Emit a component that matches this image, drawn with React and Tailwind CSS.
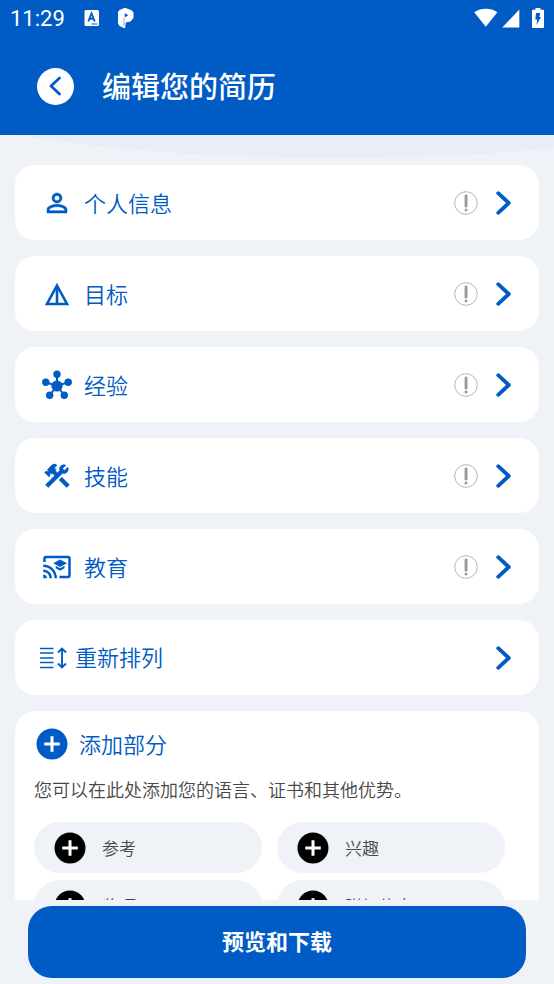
import React from "react";
import { MdPersonOutline, MdConstruction, MdCastForEducation } from "react-icons/md";

const TriangleIcon = () => (
    <svg width="26" height="24" viewBox="0 0 26 24" fill="none" stroke="currentColor" aria-hidden="true">
        <path d="M13 3.5 L23 22 H3 Z" strokeWidth="2.6" />
        <path d="M13 4 V22" strokeWidth="2.6" />
    </svg>
);

const HubIcon = () => (
    <svg width="30" height="30" viewBox="0 0 30 30" fill="currentColor" stroke="currentColor" aria-hidden="true">
        <path d="M15 16 V4 M15 16 L4 12.3 M15 16 L26 12.3 M15 16 L7.8 25 M15 16 L22.2 25" strokeWidth="2" />
        <g stroke="none">
            <circle cx="15" cy="16" r="5.6" />
            <circle cx="15" cy="4.3" r="3.7" />
            <circle cx="3.8" cy="12.2" r="3.7" />
            <circle cx="26.2" cy="12.2" r="3.7" />
            <circle cx="7.7" cy="25.2" r="3.7" />
            <circle cx="22.3" cy="25.2" r="3.7" />
        </g>
    </svg>
);

const ReorderIcon = () => (
    <svg width="30" height="24" viewBox="0 0 30 24" fill="none" stroke="currentColor" aria-hidden="true">
        <path d="M2 2.5 H15.5 M2 7 H15.5 M2 12 H15.5 M2 16.5 H15.5 M2 21.5 H15.5" strokeWidth="1.5" />
        <path d="M24 3 V21 M20 6.5 L24 2.5 L28 6.5 M20 17.5 L24 21.5 L28 17.5" strokeWidth="1.9" />
    </svg>
);

const AlertIcon = () => (
    <svg width="24" height="24" viewBox="0 0 24 24" role="img" aria-label="未完成">
        <circle cx="12" cy="12" r="11.3" fill="none" stroke="#a3a3a3" strokeWidth="0.8" />
        <rect x="10.6" y="3.6" width="2.9" height="13" rx="1.4" fill="#999" />
        <circle cx="12" cy="19" r="1.5" fill="#999" />
    </svg>
);

const ChevronIcon = () => (
    <svg width="18" height="26" viewBox="0 0 18 26" fill="none" stroke="currentColor" strokeWidth="3.8" strokeLinecap="round" strokeLinejoin="round" aria-hidden="true">
        <path d="M3.2 3.2 L13.8 13 L3.2 22.8" />
    </svg>
);

const PlusIcon = ({ className }) => (
    <svg className={className} width="32" height="32" viewBox="0 0 32 32" aria-hidden="true">
        <circle cx="16" cy="16" r="15.5" fill="currentColor" />
        <path d="M16 8.2 V23.8 M8.2 16 H23.8" stroke="#fff" strokeWidth="3" />
    </svg>
);

const sections = [
    { label: "个人信息", icon: <MdPersonOutline size={30} strokeWidth={0.4} className="[&>path[fill=none]]:stroke-none" /> },
    { label: "目标", icon: <TriangleIcon /> },
    { label: "经验", icon: <HubIcon /> },
    { label: "技能", icon: <MdConstruction size={30} strokeWidth={0.5} className="[&>path[fill=none]]:stroke-none" /> },
    { label: "教育", icon: <MdCastForEducation size={30} /> },
];

const extras = ["参考", "兴趣", "奖项", "附加信息"];

function StatusBar() {
    return (
        <div className="flex h-9 items-center justify-between pl-2.5 pr-2.5">
            <div className="flex items-center">
                <span className="w-[74px] pt-0.5 font-['Roboto',sans-serif] text-[22px] leading-9">11:29</span>
                <svg width="16" height="18" viewBox="0 0 16 18" aria-hidden="true">
                    <rect x="0.5" y="1" width="14.5" height="16" rx="1.5" fill="#fff" />
                    <path d="M4.3 12.5 L7.5 4.5 L10.8 12.5 M5.4 9.8 H9.6" fill="none" stroke="#005bc5" strokeWidth="1.9" />
                    <path d="M7.5 15 H13.5" stroke="#005bc5" strokeWidth="1" />
                </svg>
                <svg className="ml-4" width="20" height="22" viewBox="0 0 20 22" aria-hidden="true">
                    <path d="M2 5 L3.5 3 L9 0.8 L15.5 3.2 L17.5 5.5 V11 L14.5 14.5 L9.8 15.5 L9 21.5 L3.5 19 L2 16.5 Z" fill="#fff" />
                    <path d="M8.8 6 L12.2 8.2 L8.8 10.4 Z" fill="#005bc5" />
                    <path d="M8 11 V19" stroke="#005bc5" strokeWidth="0.5" />
                </svg>
            </div>
            <div className="flex items-center">
                <svg width="24" height="20" viewBox="0 0 24 20" fill="#fff" aria-hidden="true">
                    <path d="M0.2 4.2 C7 -0.4 17 -0.4 23.4 4.2 L11.8 18.8 Z" />
                </svg>
                <svg className="ml-1" width="18" height="20" viewBox="0 0 18 20" fill="#fff" aria-hidden="true">
                    <path d="M17.3 1.5 V19.5 H0.3 Z" />
                </svg>
                <svg className="ml-3" width="12" height="20" viewBox="0 0 12 20" aria-hidden="true">
                    <path d="M3.5 0 H8.5 V1.7 H11 Q12 1.7 12 2.7 V19 Q12 20 11 20 H1 Q0 20 0 19 V2.7 Q0 1.7 1 1.7 H3.5 Z" fill="#fff" />
                    <path d="M4 5 H8.3 L7.3 9 H9 L4.5 17 L5.2 11.5 H3.3 Z" fill="#005bc5" />
                </svg>
            </div>
        </div>
    );
}

function SectionRow({ label, icon }) {
    return (
        <button className="flex h-[75px] w-full shrink-0 items-center rounded-[20px] bg-white pl-[27px] pr-[26px] text-left text-[#005bc5]">
            <span className="flex w-[30px] justify-center">{icon}</span>
            <span className="ml-3 flex-1 pb-0.5 text-[22px] font-[350] leading-8">{label}</span>
            <AlertIcon />
            <span className="ml-[17px]"><ChevronIcon /></span>
        </button>
    );
}

function App() {
    return (
        <div className="flex h-screen flex-col bg-[#eff2f7] font-['Noto_Sans_CJK_SC',sans-serif]">
            {/* Header */}
            <header className="h-[135px] shrink-0 bg-[#005bc5] text-white">
                <StatusBar />
                <div className="flex h-[100px] items-center gap-7 pl-[37px]">
                    <button aria-label="返回" className="flex size-[37px] items-center justify-center rounded-full bg-white text-[#005bc5]">
                        <svg width="14" height="20" viewBox="0 0 14 20" fill="none" stroke="currentColor" strokeWidth="2.8" strokeLinecap="round" strokeLinejoin="round" aria-hidden="true">
                            <path d="M10.5 2 L2 10 L10.5 18" />
                        </svg>
                    </button>
                    <h1 className="pb-0.5 text-[29px] font-medium leading-10">编辑您的简历</h1>
                </div>
            </header>

            {/* Sections */}
            <main className="relative flex min-h-0 flex-1 flex-col gap-4 overflow-x-hidden overflow-y-auto px-[15px] pt-[30px] [scrollbar-width:none]">
                <svg className="absolute left-0 top-0 h-6 w-full" viewBox="0 0 554 24" preserveAspectRatio="none" aria-hidden="true">
                    <path d="M20 0 C180 28 400 28 554 13 V0 Z" fill="#e8edf6" />
                </svg>
                {sections.map((s) => (
                    <SectionRow key={s.label} label={s.label} icon={s.icon} />
                ))}
                <button className="flex h-[75px] w-full shrink-0 items-center rounded-[20px] bg-white pl-[23px] pr-[26px] text-left text-[#005bc5]">
                    <ReorderIcon />
                    <span className="ml-[7px] flex-1 pb-1 text-[22px] font-[350] leading-8">重新排列</span>
                    <ChevronIcon />
                </button>

                {/* Extra sections */}
                <section className="shrink-0 rounded-t-[20px] bg-white pl-[19px] pr-[34px] pt-[17px]">
                    <div className="flex items-center gap-[11px] pl-0.5 text-[#005bc5]">
                        <PlusIcon />
                        <h2 className="pb-0.5 text-[22px] font-[350] leading-7">添加部分</h2>
                    </div>
                    <p className="mt-[15px] text-[18px] font-[350] leading-7 text-[#484848]">您可以在此处添加您的语言、证书和其他优势。</p>
                    <div className="mt-[19px] grid grid-cols-2 gap-x-[15px] gap-y-[7px]">
                        {extras.map((name) => (
                            <button key={name} className="flex h-[51px] items-center gap-4 rounded-full bg-[#eff2f7] pl-5 text-[17px] font-[350] leading-7 text-[#484848]">
                                <PlusIcon className="text-black" />
                                {name}
                            </button>
                        ))}
                    </div>
                </section>
            </main>

            {/* Footer */}
            <footer className="shrink-0 px-7 pb-1.5 pt-1.5">
                <button className="h-[72px] w-full rounded-3xl bg-[#005bc5] pb-1 text-[22px] font-bold text-white">预览和下载</button>
            </footer>
        </div>
    );
}

export default App;
